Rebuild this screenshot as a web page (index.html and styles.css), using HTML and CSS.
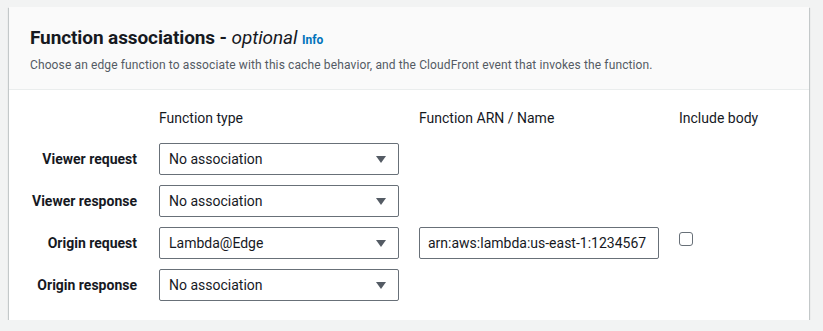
FILE: index.html
```
<!DOCTYPE html>
<html>
<head>
<meta charset="utf-8">
<link rel="stylesheet" href="styles.css">
</head>
<body>
<div class="card">
  <div class="card-header">
    <h2 class="title">Function associations - <i>optional</i> <a class="info">Info</a></h2>
    <p class="desc">Choose an edge function to associate with this cache behavior, and the CloudFront event that invokes the function.</p>
  </div>
  <div class="card-body">
    <div class="grid">
      <div></div>
      <div class="colhead">Function type</div>
      <div class="colhead">Function ARN / Name</div>
      <div class="colhead">Include body</div>

      <div class="label">Viewer request</div>
      <div class="select"><span>No association</span><svg class="caret" width="10" height="7" viewBox="0 0 10 7"><path d="M0 0h10L5 7z" fill="#545b64"/></svg></div>
      <div></div>
      <div></div>

      <div class="label">Viewer response</div>
      <div class="select"><span>No association</span><svg class="caret" width="10" height="7" viewBox="0 0 10 7"><path d="M0 0h10L5 7z" fill="#545b64"/></svg></div>
      <div></div>
      <div></div>

      <div class="label">Origin request</div>
      <div class="select"><span>Lambda@Edge</span><svg class="caret" width="10" height="7" viewBox="0 0 10 7"><path d="M0 0h10L5 7z" fill="#545b64"/></svg></div>
      <div class="input"><span>arn:aws:lambda:us-east-1:1234567</span></div>
      <div class="cbcell"><span class="checkbox"></span></div>

      <div class="label">Origin response</div>
      <div class="select"><span>No association</span><svg class="caret" width="10" height="7" viewBox="0 0 10 7"><path d="M0 0h10L5 7z" fill="#545b64"/></svg></div>
      <div></div>
      <div></div>
    </div>
  </div>
</div>
</body>
</html>
```
FILE: styles.css
```
html, body {
  margin: 0;
  padding: 0;
}
body {
  background: #f2f3f3;
  font-family: Roboto, "Open Sans", Arial, sans-serif;
  color: #16191f;
  padding: 7px 14px 0 9px;
}
.card {
  width: 800px;
  height: 313px;
  background: #fff;
  box-shadow: 0 1px 1px 0 rgba(0, 28, 36, 0.3), 1px 1px 1px 0 rgba(0, 28, 36, 0.15), -1px 1px 1px 0 rgba(0, 28, 36, 0.15);
  box-sizing: border-box;
}
.card-header {
  background: #fafafa;
  border-bottom: 1px solid #eaeded;
  padding: 19px 20px 0 21px;
  height: 83px;
  box-sizing: border-box;
}
.title {
  margin: 0;
  font-size: 19px;
  line-height: 24px;
  font-weight: 700;
  letter-spacing: -0.1px;
}
.title i {
  font-weight: 400;
}
.info {
  font-size: 12px;
  font-weight: 700;
  color: #0073bb;
  letter-spacing: 0;
}
.desc {
  margin: 5px 0 0;
  font-size: 12px;
  line-height: 16px;
  color: #545b64;
  letter-spacing: 0.12px;
}
.card-body {
  padding: 18px 20px 0 21px;
}
.grid {
  display: grid;
  grid-template-columns: 109px 240px 240px auto;
  grid-template-rows: 25px 32px 32px 32px 32px;
  column-gap: 20px;
  row-gap: 10px;
}
.colhead {
  font-size: 14px;
  line-height: 20px;
}
.label {
  font-size: 14px;
  font-weight: 700;
  text-align: right;
  align-self: center;
  white-space: nowrap;
  padding-right: 2px;
}
.select, .input {
  border: 1px solid #687078;
  border-radius: 2px;
  box-sizing: border-box;
  height: 32px;
  display: flex;
  align-items: center;
  font-size: 14px;
  overflow: hidden;
  white-space: nowrap;
  background: #fff;
}
.select {
  padding: 0 12px 0 9px;
  justify-content: space-between;
}
.input {
  padding: 0 6px 0 8px;
}
.cbcell {
  padding-top: 5px;
}
.checkbox {
  display: block;
  width: 14px;
  height: 14px;
  box-sizing: border-box;
  border: 1px solid #687078;
  border-radius: 3px;
  background: #fff;
}
```
